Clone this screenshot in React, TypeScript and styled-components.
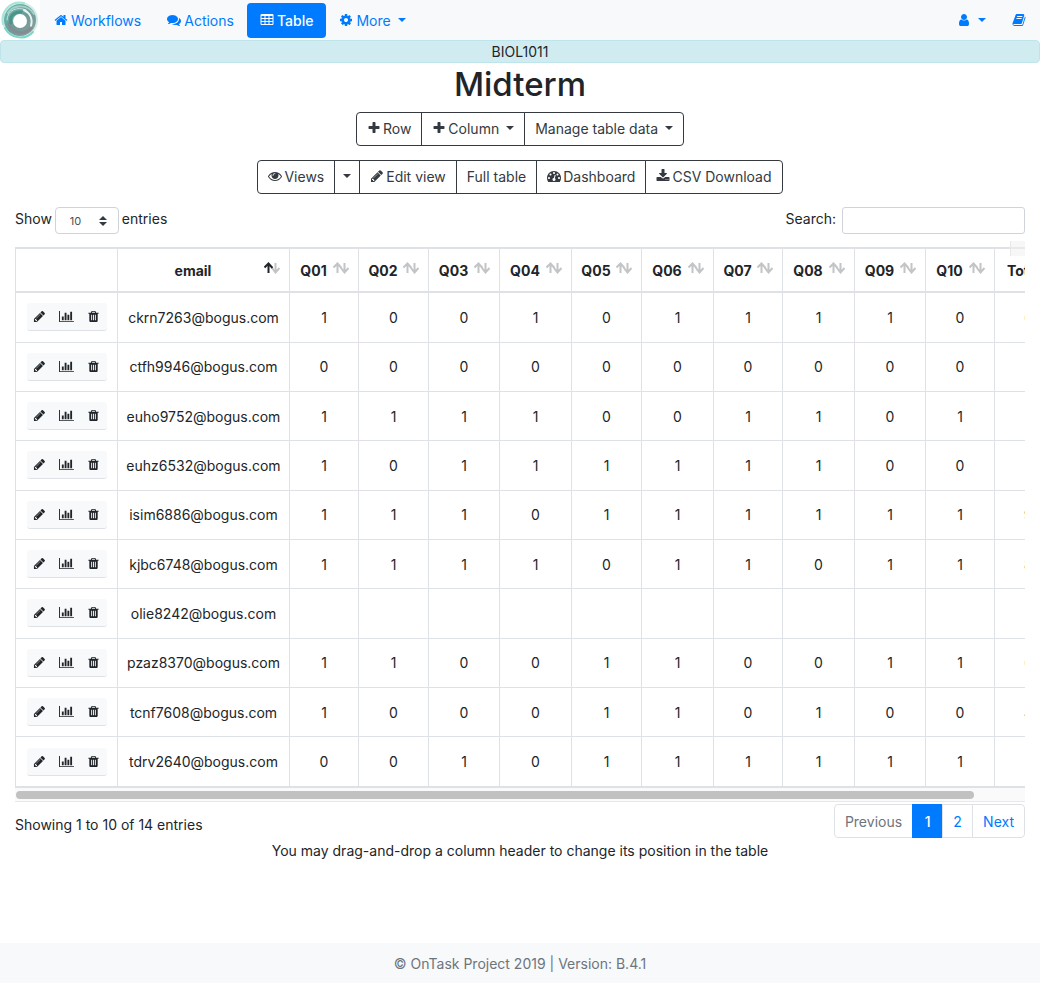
import React from "react";
import styled, { createGlobalStyle, css } from "styled-components";

const GlobalStyle = createGlobalStyle`
  *, *::before, *::after { box-sizing: border-box; }
  html, body, #root { margin: 0; min-height: 100vh; }
  body {
    background: #fff;
    color: #212529;
    font-family: Inter, "Liberation Sans", sans-serif;
    font-size: 14px;
    line-height: 21px;
  }
  button, input, select { font: inherit; color: inherit; }
`;

const paths = {
  home: "M1472 992v480q0 26-19 45t-45 19h-384v-384h-256v384h-384q-26 0-45-19t-19-45v-480q0-1 .5-3t.5-3l575-474 575 474q1 2 1 6zm223-69l-62 74q-8 9-21 11h-3q-13 0-21-7l-692-577-692 577q-12 8-24 7-13-2-21-11l-62-74q-8-10-7-23.5t11-21.5l719-599q32-26 76-26t76 26l244 204v-195q0-14 9-23t23-9h192q14 0 23 9t9 23v408l219 182q10 8 11 21.5t-7 23.5z",
  comments: "M1408 768q0 139-94 257t-256.5 186.5-353.5 68.5q-86 0-176-16-124 88-278 128-36 9-86 16h-3q-11 0-20.5-8t-11.5-21q-1-3-1-6.5t.5-6.5 2-6l2.5-5 3.5-5.5 4-5 4.5-5 4-4.5q5-6 23-25t26-29.5 22.5-29 25-38.5 20.5-44q-124-72-195-177t-71-224q0-139 94-257t256.500-186.500 353.500-68.500 353.500 68.500 256.500 186.500 94 257zm384 256q0 120-71 224.500t-195 176.500q10 24 20.500 44t25 38.500 22.500 29 26 29.500 23 25q1 1 4 4.500t4.500 5 4 5 3.500 5.500l2.500 5 2 6 .5 6.500-1 6.500q-3 14-13 22t-22 7q-50-7-86-16-154-40-278-128-90 16-176 16-271 0-472-132 58 4 88 4 161 0 309-45t264-129q125-92 192-212t67-254q0-77-23-152 129 71 204 178t75 230z",
  table: "M224 128h1344q66 0 113 47t47 113v1088q0 66-47 113t-113 47h-1344q-66 0-113-47t-47-113v-1088q0-66 47-113t113-47zM192 384v256h384v-256zM704 384v256h384v-256zM1216 384v256h384v-256zM192 768v256h384v-256zM704 768v256h384v-256zM1216 768v256h384v-256zM192 1152v256h384v-256zM704 1152v256h384v-256zM1216 1152v256h384v-256z",
  cog: "M1152 896q0-106-75-181t-181-75-181 75-75 181 75 181 181 75 181-75 75-181zm512-109v222q0 12-8 23t-20 13l-185 28q-19 54-39 91 35 50 107 138 10 12 10 25t-9 23q-27 37-99 108t-94 71q-12 0-26-9l-138-108q-44 23-91 38-16 136-29 186-7 28-36 28h-222q-14 0-24.5-8.5t-11.5-21.5l-28-184q-49-16-90-37l-141 107q-10 9-25 9-14 0-25-11-126-114-165-168-7-10-7-23 0-12 8-23 15-21 51-66.5t54-70.5q-27-50-41-99l-183-27q-13-2-21-12.5t-8-23.5v-222q0-12 8-23t19-13l186-28q14-46 39-92-40-57-107-138-10-12-10-24 0-10 9-23 26-36 98.5-107.5t94.5-71.5q13 0 26 10l138 107q44-23 91-38 16-136 29-186 7-28 36-28h222q14 0 24.5 8.5t11.5 21.5l28 184q49 16 90 37l142-107q9-9 24-9 13 0 25 10 129 119 165 170 7 8 7 22 0 12-8 23-15 21-51 66.5t-54 70.5q26 50 41 98l183 28q13 2 21 12.5t8 23.5z",
  user: "M1536 1399q0 109-62.5 187t-150.5 78h-854q-88 0-150.5-78t-62.5-187q0-85 8.5-160.5t31.5-152 58.5-131 94-89 134.5-34.5q131 128 313 128t313-128q76 0 134.5 34.5t94 89 58.5 131 31.5 152 8.5 160.5zm-256-887q0 159-112.5 271.5t-271.5 112.5-271.5-112.5-112.5-271.5 112.5-271.5 271.5-112.5 271.5 112.5 112.5 271.5z",
  book: "M1703 478q40 57 18 129l-275 906q-19 64-76.5 107.5t-122.5 43.5h-923q-77 0-148.5-53.5t-99.5-131.5q-24-67-2-127 0-4 3-27t4-37q1-8-3-21.5t-3-19.5q2-11 8-21t16.5-23.5 16.5-23.5q23-38 45-91.5t30-91.5q3-10 .5-30t-.5-28q3-11 17-28t17-23q21-36 42-92t25-90q1-9-2.5-32t.5-28q4-13 22-30.5t22-22.5q19-26 42.5-84.5t27.5-96.5q1-8-3-25.5t-2-26.5q2-8 9-18t18-23 17-21q8-12 16.5-30.5t15-35 16-36 19.5-32 26.5-23.5 36-11.5 47.5 5.5l-1 3q38-9 51-9h761q74 0 114 56t18 130l-274 906q-36 119-71.5 153.5t-128.5 34.5h-869q-27 0-38 15-11 16-1 43 24 70 144 70h923q29 0 56-15.5t35-41.5l300-987q7-22 5-57 38 15 59 43zm-1064 2q-4 13 2 22.5t20 9.5h608q13 0 25.5-9.5t16.5-22.5l21-64q4-13-2-22.5t-20-9.5h-608q-13 0-25.5 9.5t-16.5 22.5zm-83 256q-4 13 2 22.5t20 9.5h608q13 0 25.5-9.5t16.5-22.5l21-64q4-13-2-22.5t-20-9.5h-608q-13 0-25.5 9.5t-16.5 22.5z",
  plus: "M1600 736v192q0 40-28 68t-68 28h-416v416q0 40-28 68t-68 28h-192q-40 0-68-28t-28-68v-416h-416q-40 0-68-28t-28-68v-192q0-40 28-68t68-28h416v-416q0-40 28-68t68-28h192q40 0 68 28t28 68v416h416q40 0 68 28t28 68z",
  eye: "M1664 960q-152-236-381-353 61 104 61 225 0 185-131.5 316.5t-316.5 131.5-316.5-131.5-131.5-316.5q0-121 61-225-229 117-381 353 133 205 333.5 326.5t434.5 121.5 434.5-121.5 333.5-326.5zm-720-384q0-20-14-34t-34-14q-125 0-214.5 89.5t-89.5 214.5q0 20 14 34t34 14 34-14 14-34q0-86 61-147t147-61q20 0 34-14t14-34zm848 384q0 34-20 69-140 230-376.5 368.5t-499.5 138.5-499.5-139-376.5-368q-20-35-20-69t20-69q140-229 376.5-368t499.5-139 499.5 139 376.5 368q20 35 20 69z",
  pencil: "M491 1536l91-91-235-235-91 91v107h128v128h107zm523-928q0-22-22-22-10 0-17 7l-542 542q-7 7-7 17 0 22 22 22 10 0 17-7l542-542q7-7 7-17zm-54-192l416 416-832 832h-416v-416zm683 96q0 53-37 90l-166 166-416-416 166-165q36-38 90-38 53 0 91 38l235 234q37 39 37 91z",
  dashboard: "M384 1152q0-53-37.5-90.5t-90.5-37.5-90.5 37.5-37.5 90.5 37.5 90.5 90.5 37.5 90.5-37.5 37.5-90.5zm192-448q0-53-37.5-90.5t-90.5-37.5-90.5 37.5-37.5 90.5 37.5 90.5 90.5 37.5 90.5-37.5 37.5-90.5zm428 481l101-382q6-26-7.5-48.5t-38.5-29.5-48 6.5-30 39.5l-101 382q-60 5-107 43.5t-63 98.5q-20 77 20 146t117 89 146-20 89-117q16-60-6-117t-72-91zm660-33q0-53-37.5-90.5t-90.5-37.5-90.5 37.5-37.5 90.5 37.5 90.5 90.5 37.5 90.5-37.5 37.5-90.5zm-640-640q0-53-37.5-90.5t-90.5-37.5-90.5 37.5-37.5 90.5 37.5 90.5 90.5 37.5 90.5-37.5 37.5-90.5zm448 192q0-53-37.5-90.5t-90.5-37.5-90.5 37.5-37.5 90.5 37.5 90.5 90.5 37.5 90.5-37.5 37.5-90.5zm320 448q0 261-141 483-19 29-54 29h-1402q-35 0-54-29-141-221-141-483 0-182 71-348t191-286 286-191 348-71 348 71 286 191 191 286 71 348z",
  download: "M1344 1344q0-26-19-45t-45-19-45 19-19 45 19 45 45 19 45-19 19-45zm256 0q0-26-19-45t-45-19-45 19-19 45 19 45 45 19 45-19 19-45zm128-224v320q0 40-28 68t-68 28h-1472q-40 0-68-28t-28-68v-320q0-40 28-68t68-28h465l135 136q58 56 136 56t136-56l136-136h464q40 0 68 28t28 68zm-325-569q17 41-14 70l-448 448q-18 19-45 19t-45-19l-448-448q-31-29-14-70 17-39 59-39h256v-448q0-26 19-45t45-19h256q26 0 45 19t19 45v448h256q42 0 59 39z",
  chart: "M640 896v512h-256v-512h256zm384-512v1024h-256v-1024h256zm1024 1152v128h-2048v-1536h128v1408h1920zm-640-896v768h-256v-768h256zm384-384v1152h-256v-1152h256z",
  trash: "M704 1376v-704q0-14-9-23t-23-9h-64q-14 0-23 9t-9 23v704q0 14 9 23t23 9h64q14 0 23-9t9-23zm256 0v-704q0-14-9-23t-23-9h-64q-14 0-23 9t-9 23v704q0 14 9 23t23 9h64q14 0 23-9t9-23zm256 0v-704q0-14-9-23t-23-9h-64q-14 0-23 9t-9 23v704q0 14 9 23t23 9h64q14 0 23-9t9-23zm-544-992h448l-48-117q-7-9-17-11h-317q-10 2-17 11zm928 32v64q0 14-9 23t-23 9h-96v948q0 83-47 143.5t-113 60.5h-832q-66 0-113-58.5t-47-141.5v-952h-96q-14 0-23-9t-9-23v-64q0-14 9-23t23-9h309l70-167q15-37 54-63t79-26h320q40 0 79 26t54 63l70 167h309q14 0 23 9t9 23z",
};

type IconName = keyof typeof paths;

const Glyph = styled.svg`
  display: block;
  flex: none;
  fill: currentColor;
  fill-rule: evenodd;
`;

function Icon({ name, size = 14 }: { name: IconName; size?: number }) {
  const wide = name === "chart";
  return (
    <Glyph
      height={size}
      width={wide ? Math.round((size * 8) / 7) : size}
      viewBox={wide ? "0 0 2048 1792" : "0 0 1792 1792"}
      aria-hidden="true"
    >
      <path d={paths[name]} />
    </Glyph>
  );
}

const Page = styled.div`
  display: flex;
  flex-direction: column;
  min-height: 100vh;
`;

const NavBar = styled.nav`
  display: flex;
  align-items: center;
  height: 40px;
  background: #f8f9fa;
  padding-right: 14px;
`;

const Brand = styled.a`
  display: block;
  width: 40px;
  height: 40px;
  margin-right: 1px;
  background: #fff;
`;

const NavLink = styled.a<{ $active?: boolean }>`
  display: flex;
  align-items: center;
  gap: 3px;
  height: 35px;
  padding: 0 13px;
  border-radius: 4px;
  color: ${(p) => (p.$active ? "#fff" : "#007bff")};
  background: ${(p) => (p.$active ? "#007bff" : "transparent")};
  ${(p) => p.$active && css`font-weight: 500;`}
  text-decoration: none;
`;

const NavEnd = styled.div`
  display: flex;
  margin-left: auto;
  ${NavLink}:last-child { padding-right: 0; }
`;

const Caret = styled.span`
  width: 0;
  height: 0;
  margin-left: 4px;
  border: 4px solid transparent;
  border-top-color: currentColor;
  border-bottom: 0;
`;

const CourseBanner = styled.div`
  height: 23px;
  border: 1px solid #bee5eb;
  border-radius: 4px;
  background: #d1ecf1;
  color: #212529;
  text-align: center;
`;

const Main = styled.main`
  flex: 1;
  padding: 0 15px;
`;

const Title = styled.h1`
  margin: 0 0 7px;
  font-size: 33px;
  line-height: 42px;
  font-weight: 500;
  text-align: center;
`;

const Toolbars = styled.div`
  display: grid;
  gap: 14px;
  margin-bottom: 13px;
`;

const Toolbar = styled.div`
  display: flex;
  justify-content: center;
`;

const ToolButton = styled.button<{ $narrow?: boolean }>`
  display: flex;
  align-items: center;
  gap: 2px;
  height: 34px;
  padding: 0 ${(p) => (p.$narrow ? 8 : 10)}px 2px;
  margin-left: -1px;
  border: 1px solid #343a40;
  background: #fff;
  color: #343a40;
  white-space: nowrap;
  &:first-child { border-radius: 4px 0 0 4px; margin-left: 0; }
  &:last-child { border-radius: 0 4px 4px 0; }
  ${Caret} { margin-left: ${(p) => (p.$narrow ? 0 : 5)}px; }
`;

const Controls = styled.div`
  display: flex;
  justify-content: space-between;
  height: 27px;
  margin-bottom: 13px;
`;

const ControlLabel = styled.label`
  display: flex;
  align-items: flex-start;
  gap: 3px;
  line-height: 24px;
`;

const SelectWrap = styled.span`
  position: relative;
  display: block;
`;

const LengthSelect = styled.select`
  display: block;
  width: 64px;
  height: 27px;
  padding: 0 14px;
  border: 1px solid #ced4da;
  border-radius: 4px;
  background: #fff;
  color: #495057;
  font-size: 11px;
  appearance: none;
`;

const SelectArrows = styled.svg`
  position: absolute;
  right: 12px;
  top: 9px;
  fill: #343a40;
  pointer-events: none;
`;

const SearchInput = styled.input`
  width: 183px;
  height: 27px;
  margin-left: 3px;
  padding: 0 7px;
  border: 1px solid #ced4da;
  border-radius: 3px;
`;

const TableArea = styled.div`
  position: relative;
`;

const TableScroll = styled.div`
  overflow: hidden;
`;

const HeaderCorner = styled.span`
  position: absolute;
  top: -6px;
  right: 0;
  width: 15px;
  height: 15px;
  border-left: 1px solid #e8e8e8;
  background: rgba(240, 240, 240, 0.5);
`;

const DataTable = styled.table`
  table-layout: fixed;
  width: 1060px;
  height: 541px;
  border-collapse: collapse;
  border: 1px solid #dee2e6;
  border-top-width: 2px;
  border-bottom-width: 2px;
  text-align: center;
`;

const HeadCell = styled.th`
  height: 44px;
  padding: 0 9px;
  border: 1px solid #dee2e6;
  border-top-width: 2px;
  border-bottom-width: 2px;
  font-weight: 700;
`;

const HeadContent = styled.span`
  display: flex;
  align-items: center;
  gap: 5px;
`;

const HeadLabel = styled.span`
  flex: 1;
`;

const Cell = styled.td`
  padding: 0;
  border: 1px solid #dee2e6;
`;

const SortGlyph = styled.svg`
  display: block;
  flex: none;
  fill: none;
  stroke-width: 2;
  margin-bottom: 4px;
`;

const RowActions = styled.div`
  display: flex;
  width: 80px;
  margin: 0 auto;
  border-bottom: 1px solid #dee2e6;
  border-radius: 3px;
  background: #f8f9fa;
`;

const RowButton = styled.button`
  display: flex;
  flex: 1;
  align-items: center;
  justify-content: center;
  height: 27px;
  padding: 0;
  border: 0;
  background: transparent;
`;

const ScrollTrack = styled.div`
  height: 14px;
  padding: 3px 1px;
  border-bottom: 1px solid #e8e8e8;
  background: #fafafa;
`;

const ScrollThumb = styled.div`
  height: 8px;
  border-radius: 4px;
  background: #c1c1c1;
`;

const TableFooter = styled.div`
  display: flex;
  justify-content: space-between;
  margin-top: 2px;
`;

const Info = styled.div`
  padding-top: 10px;
`;

const Pagination = styled.div`
  display: flex;
`;

const PageLink = styled.a<{ $state?: "active" | "disabled" }>`
  min-width: 31px;
  padding: 6px 10px;
  height: 34px;
  margin-left: -1px;
  border: 1px solid #dee2e6;
  background: #fff;
  color: #007bff;
  text-align: center;
  text-decoration: none;
  &:first-child { border-radius: 4px 0 0 4px; }
  &:last-child { border-radius: 0 4px 4px 0; }
  ${(p) => p.$state === "disabled" && css`color: #6c757d;`}
  ${(p) => p.$state === "active" && css`
    color: #fff;
    background: #007bff;
    border-color: #007bff;
    font-weight: 500;
  `}
`;

const Hint = styled.p`
  margin: 2px 0 0;
  text-align: center;
`;

const PageFooter = styled.footer`
  height: 40px;
  padding-top: 10px;
  background: #f8f9fa;
  color: #6c757d;
  text-align: center;
`;

function Logo() {
  return (
    <svg width="40" height="40" viewBox="0 0 40 40" role="img" aria-label="OnTask">
      <defs>
        <linearGradient id="ring" x1="0" y1="0" x2="1" y2="1">
          <stop offset="0" stopColor="#6cc4b5" />
          <stop offset="0.5" stopColor="#6b9c98" />
          <stop offset="1" stopColor="#969ba0" />
        </linearGradient>
      </defs>
      <circle cx="20" cy="20" r="18" fill="#cdeee7" />
      <circle cx="20" cy="20" r="16" fill="url(#ring)" />
      <g fill="none" strokeLinecap="round">
        <path d="M3 24C0 10 12 0 24 3" stroke="#a9e3d8" strokeWidth="2" />
        <path d="M5 28C10 38 25 41 33 32" stroke="#7fd6c8" strokeWidth="2" />
        <path d="M8 13C14 4 28 4 34 14" stroke="#a5cfc9" strokeWidth="2" />
        <path d="M7 20C7 10 18 6 26 10" stroke="#c4dedb" strokeWidth="1" />
        <path d="M24 10C30 13 33 19 31 26" stroke="#e5f3f1" strokeWidth="2" />
        <path d="M9 24C12 33 24 36 31 28" stroke="#858c91" strokeWidth="3" />
        <path d="M11 23C9 16 14 12 21 12" stroke="#4a958b" strokeWidth="3" />
      </g>
      <circle cx="20" cy="21" r="7" fill="#fff" />
    </svg>
  );
}

function SortIcon({ active }: { active?: boolean }) {
  return (
    <SortGlyph width="16" height="12" viewBox="0 0 16 12" aria-hidden="true">
      <path d="M8 6l3.500 4.500L15.500 6M11.500 1v9" stroke="#c2c4c6" />
      <path d="M.5 5.500L4.500 1.500 8.500 6M4.500 2v9" stroke={active ? "#212529" : "#c2c4c6"} />
    </SortGlyph>
  );
}

const columnWidths = [102, 172, 69, 70, 71, 72, 70, 72, 69, 72, 71, 69, 80];
const questions = ["Q01", "Q02", "Q03", "Q04", "Q05", "Q06", "Q07", "Q08", "Q09", "Q10"];

const students: { email: string; marks: string; total: string }[] = [
  { email: "ckrn7263@bogus.com", marks: "1001011110", total: "6.0" },
  { email: "ctfh9946@bogus.com", marks: "0000000000", total: "0" },
  { email: "euho9752@bogus.com", marks: "1111001101", total: "7.0" },
  { email: "euhz6532@bogus.com", marks: "1011111100", total: "7.0" },
  { email: "isim6886@bogus.com", marks: "1110111111", total: "9.0" },
  { email: "kjbc6748@bogus.com", marks: "1111011011", total: "8.0" },
  { email: "olie8242@bogus.com", marks: "", total: "" },
  { email: "pzaz8370@bogus.com", marks: "1100110011", total: "6.0" },
  { email: "tcnf7608@bogus.com", marks: "1000110100", total: "4.0" },
  { email: "tdrv2640@bogus.com", marks: "0010111111", total: "7.0" },
];

const visibleShare = 95;

export default function App() {
  return (
    <Page>
      <GlobalStyle />
      <NavBar>
        <Brand href="#"><Logo /></Brand>
        <NavLink href="#"><Icon name="home" /> Workflows</NavLink>
        <NavLink href="#"><Icon name="comments" /> Actions</NavLink>
        <NavLink href="#" $active><Icon name="table" /> Table</NavLink>
        <NavLink href="#"><Icon name="cog" /> More <Caret /></NavLink>
        <NavEnd>
          <NavLink href="#" aria-label="Account"><Icon name="user" /><Caret /></NavLink>
          <NavLink href="#" aria-label="Documentation"><Icon name="book" /></NavLink>
        </NavEnd>
      </NavBar>
      <CourseBanner>BIOL1011</CourseBanner>
      <Main>
        <Title>Midterm</Title>
        <Toolbars>
          <Toolbar>
            <ToolButton><Icon name="plus" /> Row</ToolButton>
            <ToolButton><Icon name="plus" /> Column <Caret /></ToolButton>
            <ToolButton>Manage table data <Caret /></ToolButton>
          </Toolbar>
          <Toolbar>
            <ToolButton><Icon name="eye" /> Views</ToolButton>
            <ToolButton $narrow aria-label="Choose view"><Caret /></ToolButton>
            <ToolButton><Icon name="pencil" /> Edit view</ToolButton>
            <ToolButton>Full table</ToolButton>
            <ToolButton><Icon name="dashboard" /> Dashboard</ToolButton>
            <ToolButton><Icon name="download" /> CSV Download</ToolButton>
          </Toolbar>
        </Toolbars>
        <Controls>
          <ControlLabel>
            Show
            <SelectWrap>
              <LengthSelect defaultValue="10">
                <option>10</option>
                <option>25</option>
                <option>50</option>
              </LengthSelect>
              <SelectArrows width="8" height="10" viewBox="0 0 8 10">
                <path d="M0 4L4 0l4 4zM0 6h8l-4 4z" />
              </SelectArrows>
            </SelectWrap>
            entries
          </ControlLabel>
          <ControlLabel>
            Search:
            <SearchInput type="search" />
          </ControlLabel>
        </Controls>
        <TableArea>
          <TableScroll>
            <DataTable>
              <colgroup>
                {columnWidths.map((w, i) => <col key={i} width={w} />)}
              </colgroup>
              <thead>
                <tr>
                  <HeadCell />
                  <HeadCell>
                    <HeadContent><HeadLabel>email</HeadLabel><SortIcon active /></HeadContent>
                  </HeadCell>
                  {[...questions, "Total"].map((q) => (
                    <HeadCell key={q}>
                      <HeadContent><HeadLabel>{q}</HeadLabel><SortIcon /></HeadContent>
                    </HeadCell>
                  ))}
                </tr>
              </thead>
              <tbody>
                {students.map((s) => (
                  <tr key={s.email}>
                    <Cell>
                      <RowActions>
                        <RowButton aria-label="Edit row"><Icon name="pencil" size={13} /></RowButton>
                        <RowButton aria-label="Row statistics"><Icon name="chart" size={13} /></RowButton>
                        <RowButton aria-label="Delete row"><Icon name="trash" size={13} /></RowButton>
                      </RowActions>
                    </Cell>
                    <Cell>{s.email}</Cell>
                    {questions.map((q, i) => <Cell key={q}>{s.marks[i]}</Cell>)}
                    <Cell>{s.total}</Cell>
                  </tr>
                ))}
              </tbody>
            </DataTable>
          </TableScroll>
          <HeaderCorner />
        </TableArea>
        <ScrollTrack><ScrollThumb style={{ width: `${visibleShare}%` }} /></ScrollTrack>
        <TableFooter>
          <Info>Showing 1 to 10 of 14 entries</Info>
          <Pagination>
            <PageLink $state="disabled">Previous</PageLink>
            <PageLink href="#" $state="active">1</PageLink>
            <PageLink href="#">2</PageLink>
            <PageLink href="#">Next</PageLink>
          </Pagination>
        </TableFooter>
        <Hint>You may drag-and-drop a column header to change its position in the table</Hint>
      </Main>
      <PageFooter>© OnTask Project 2019 | Version: B.4.1</PageFooter>
    </Page>
  );
}
